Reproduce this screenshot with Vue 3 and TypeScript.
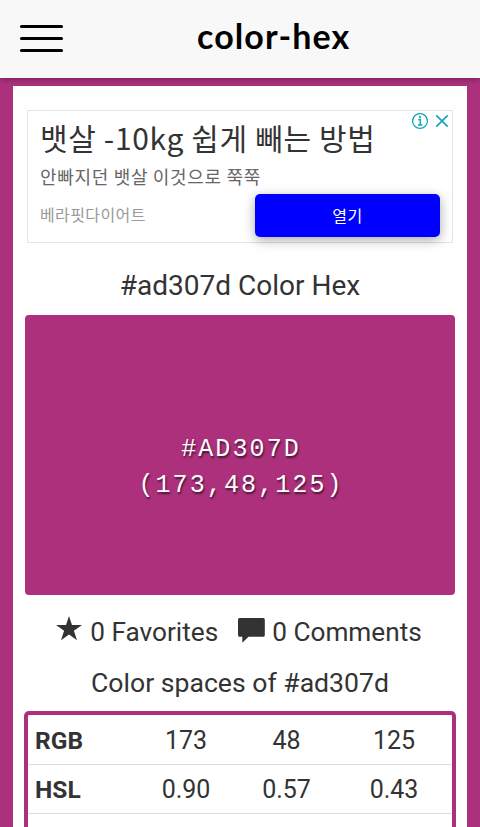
<template>
  <div class="page">
    <header class="topbar">
      <button type="button" class="menu-btn" aria-label="Menu">
        <span v-for="n in 3" :key="n" class="menu-line"></span>
      </button>
      <div class="logo">color-hex</div>
    </header>

    <main class="content">
      <section class="ad">
        <div class="ad-controls">
          <svg width="18" height="18" viewBox="0 0 18 18" fill="none" stroke="#12a5bd">
            <circle cx="9" cy="9" r="7.4" stroke-width="1.3" />
            <path d="M7.2 7.6H9.3V13M7 13H11.4" stroke-width="1.5" />
            <circle cx="9" cy="4.9" r="1.1" fill="#12a5bd" stroke="none" />
          </svg>
          <svg width="14" height="14" viewBox="0 0 14 14" fill="none" stroke="#12a5bd">
            <path d="M1.3 1.3L12.7 12.7M12.7 1.3L1.3 12.7" stroke-width="1.7" />
          </svg>
        </div>
        <div class="ad-title">뱃살 -10kg 쉽게 빼는 방법</div>
        <div class="ad-text">안빠지던 뱃살 이것으로 쭉쭉</div>
        <div class="ad-footer">
          <span class="ad-brand">베라핏다이어트</span>
          <button type="button" class="ad-btn">열기</button>
        </div>
      </section>

      <h1 class="title">{{ hex }} Color Hex</h1>

      <div class="swatch">
        <div class="swatch-hex">{{ hex.toUpperCase() }}</div>
        <div class="swatch-rgb">({{ rgb.join(',') }})</div>
      </div>

      <div class="stats">
        <span class="stat">
          <svg class="star" width="26" height="25" viewBox="0 0 26 25" fill="#333">
            <path d="M13 0L16 9.1H26L17.9 14.8L21 24.3L13 18.5L5 24.3L8.1 14.8L0 9.1H10Z" />
          </svg>
          <span>0 Favorites</span>
        </span>
        <span class="stat">
          <svg class="bubble" width="27" height="25" viewBox="0 0 27 25" fill="#333">
            <path d="M1.6 0H25.2Q26.8 0 26.8 1.6V17.2Q26.8 18.8 25.2 18.8H10.5L4.3 24.8V18.8H1.6Q0 18.8 0 17.2V1.6Q0 0 1.6 0Z" />
          </svg>
          <span>0 Comments</span>
        </span>
      </div>

      <h2 class="subtitle">Color spaces of {{ hex }}</h2>

      <div class="spaces">
        <div v-for="row in spaces" :key="row.name" class="space-row">
          <b>{{ row.name }}</b>
          <span v-for="(value, index) in row.values" :key="index">{{ value }}</span>
        </div>
      </div>
    </main>
  </div>
</template>

<script setup lang="ts">
interface SpaceRow {
  name: string;
  values: string[];
}

const hex = '#ad307d';
const rgb = [173, 48, 125];

const spaces: SpaceRow[] = [
  { name: 'RGB', values: rgb.map(String) },
  { name: 'HSL', values: ['0.90', '0.57', '0.43'] }
];
</script>

<style>
body {
  background: #ad307d;
  overflow: hidden;
}
</style>

<style scoped>
.page {
  box-sizing: border-box;
  height: 827px;
  overflow: hidden;
  display: flex;
  flex-direction: column;
  background: #ad307d;
  color: #333;
  font-family: Roboto, sans-serif;
}

.topbar {
  box-sizing: border-box;
  flex: 0 0 78px;
  display: flex;
  align-items: center;
  padding-left: 20px;
  background: #f8f8f8;
  box-shadow: 0 1px 6px rgba(0, 0, 0, 0.35);
}

.menu-btn {
  display: flex;
  flex-direction: column;
  gap: 9px;
  width: 43px;
  margin-top: -1px;
  padding: 0;
  border: 0;
  background: none;
}

.menu-line {
  height: 3px;
  border-radius: 2px;
  background: #000;
}

.logo {
  margin: -7px 0 0 134px;
  color: #000;
  font: 700 34px/44px Lato, sans-serif;
  letter-spacing: 1.1px;
  white-space: nowrap;
}

.content {
  box-sizing: border-box;
  flex: 1;
  min-height: 0;
  margin: 8px 13px 0;
  padding: 24px 12px 0;
  background: #fff;
}

.ad {
  position: relative;
  box-sizing: border-box;
  height: 133px;
  margin: 0 2px;
  padding: 3px 12px 0;
  border: 1px solid #e4e4e4;
  font-family: "Noto Sans CJK KR", sans-serif;
  white-space: nowrap;
}

.ad-controls {
  position: absolute;
  top: 1px;
  right: 3px;
  display: flex;
  align-items: center;
  gap: 6px;
}

.ad-title {
  font-size: 30px;
  line-height: 46px;
  letter-spacing: 0.65px;
}

.ad-text {
  color: #666;
  font-size: 18px;
  line-height: 32px;
  letter-spacing: 0.68px;
}

.ad-footer {
  display: flex;
  align-items: center;
  justify-content: space-between;
  padding-top: 2px;
}

.ad-brand {
  margin-top: -3px;
  color: #999;
  font-size: 16px;
  letter-spacing: 0.4px;
}

.ad-btn {
  width: 185px;
  height: 43px;
  padding: 0 0 2px;
  border: 0;
  border-radius: 5px;
  background: #00f;
  color: #fff;
  font: 16px "Noto Sans CJK KR", sans-serif;
  letter-spacing: 0.5px;
  box-shadow: 0 3px 12px rgba(0, 0, 0, 0.35);
}

.title,
.subtitle {
  margin: 0;
  font-weight: 400;
  text-align: center;
  white-space: nowrap;
}

.title {
  padding-top: 23px;
  font-size: 28px;
  line-height: 40px;
}

.swatch {
  box-sizing: border-box;
  height: 280px;
  margin-top: 9px;
  padding: 117px 0 0 2px;
  border-radius: 4px;
  background: #ad307d;
  color: #fff;
  font: 25px/36px "Liberation Mono", monospace;
  letter-spacing: 2.1px;
  text-align: center;
  text-shadow: 1px 2px 2px rgba(0, 0, 0, 0.6);
}

.stats {
  display: flex;
  justify-content: center;
  gap: 20px;
  padding: 17px 2px 0 0;
  font-size: 26.2px;
  line-height: 40px;
  white-space: nowrap;
}

.stat {
  display: flex;
  gap: 8px;
}

.stat:last-child {
  gap: 7px;
}

.star {
  margin-top: 4px;
}

.bubble {
  margin-top: 6px;
}

.subtitle {
  padding-top: 11px;
  font-size: 26.6px;
  line-height: 40px;
}

.spaces {
  box-sizing: border-box;
  height: 170px;
  margin: 8px -1px 0;
  border: 4px solid #ad307d;
  border-radius: 5px;
}

.space-row {
  box-sizing: border-box;
  display: grid;
  grid-template-columns: 107px 102px 99px 1fr;
  height: 49px;
  border-bottom: 1px solid #ddd;
  font-size: 25px;
  line-height: 49px;
  text-align: center;
}

.space-row:first-child {
  height: 50px;
  line-height: 51px;
}

.space-row b {
  padding-left: 7px;
  font-size: 24.5px;
  text-align: left;
}
</style>
